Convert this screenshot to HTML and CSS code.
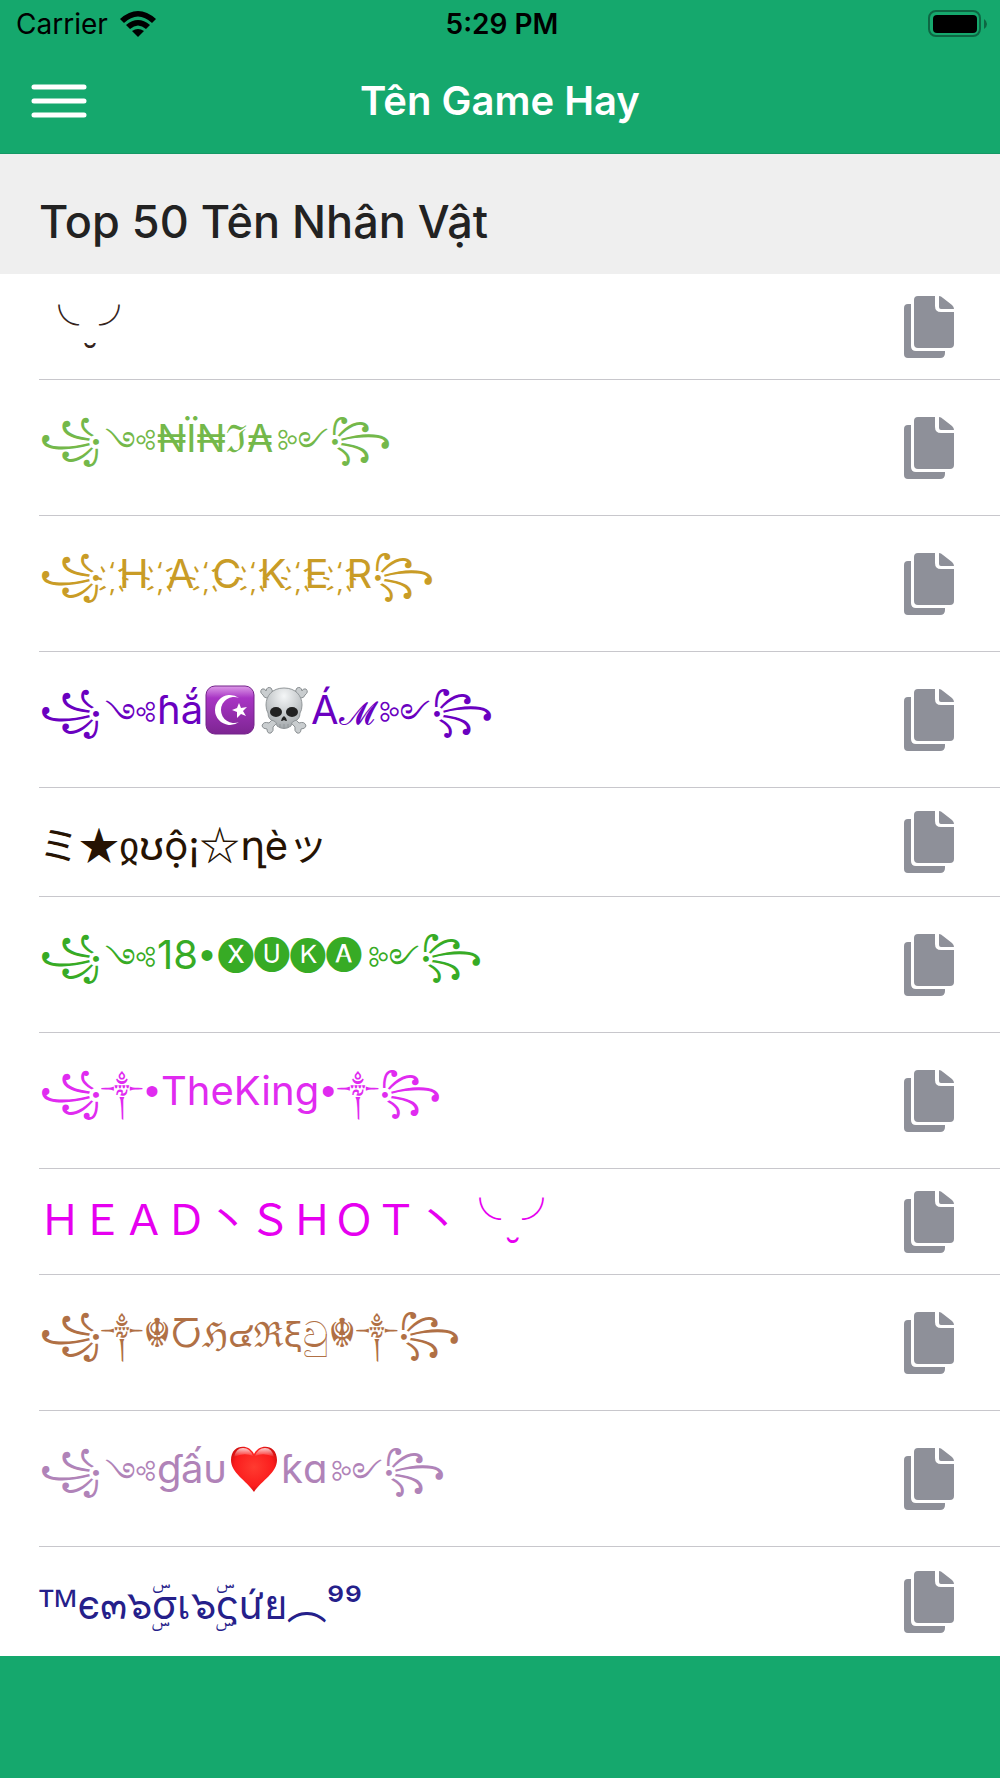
FILE: index.html
```html
<!DOCTYPE html>
<html lang="vi">
<head>
    <meta charset="UTF-8">
    <meta name="viewport" content="width=device-width, initial-scale=1.0">
    <title>Tên Game Hay</title>
    <link rel="stylesheet" href="styles.css">
</head>
<body>
    <!-- Shared icon -->
    <svg class="defs" width="0" height="0" aria-hidden="true">
        <symbol id="copy" viewBox="0 0 50 62">
            <path d="M14 0H31V10Q31 16 37 16H50V48Q50 52 46 52H14Q10 52 10 48V4Q10 0 14 0Z"/>
            <path d="M35 0Q37 0 39 2L48 9Q50 11 50 13H37Q35 13 35 11Z"/>
            <path d="M4 8H7V50Q7 55 12 55H41V57Q41 62 36 62H4Q0 62 0 58V12Q0 8 4 8Z"/>
        </symbol>
    </svg>

    <header class="header">
        <div class="status-bar">
            <div class="carrier">
                <span>Carrier</span>
                <svg width="36" height="26" viewBox="0 0 36 26" aria-hidden="true">
                    <path d="M0 8Q18 -8 36 8L32 12Q18 -1 4 12Z"/>
                    <path d="M6 14Q18 4 30 14L26 18Q18 11 10 18Z"/>
                    <path d="M12 20Q18 16 24 20L18 26Z"/>
                </svg>
            </div>
            <span class="time">5:29 PM</span>
            <svg class="battery" width="60" height="28" viewBox="0 0 60 28" aria-hidden="true">
                <rect x="1" y="1" width="51" height="25" rx="7" fill="none" stroke="#0e6643" stroke-width="2"/>
                <rect x="5" y="5" width="44" height="18" rx="4"/>
                <path d="M56 9Q59 11 59 14T56 19Z" fill="#0e6643"/>
            </svg>
        </div>
        <nav class="nav">
            <button class="menu" type="button" aria-label="Menu">
                <svg width="56" height="34" viewBox="0 0 56 34" stroke="#fff" stroke-width="5" stroke-linecap="round">
                    <path d="M3 3H53M3 17H53M3 31H53"/>
                </svg>
            </button>
            <h1>Tên Game Hay</h1>
        </nav>
    </header>

    <main>
        <h2>Top 50 Tên Nhân Vật</h2>
        <ul class="list">
            <li class="row short c1">
                <span class="name"><span class="cjk">╰ ̮ ╯</span></span>
                <button class="copy" type="button" aria-label="Copy"><svg width="50" height="62"><use href="#copy"/></svg></button>
            </li>
            <li class="row c2">
                <span class="name">꧁<span class="orn swirl">༺</span><span class="small">₦Ï₦ℑ₳</span><span class="orn swirl">༻</span>꧂</span>
                <button class="copy" type="button" aria-label="Copy"><svg width="50" height="62"><use href="#copy"/></svg></button>
            </li>
            <li class="row c3">
                <span class="name">꧁<span class="ring">&nbsp;҉</span>H<span class="ring">&nbsp;҉</span>A<span class="ring">&nbsp;҉</span>C<span class="ring">&nbsp;҉</span>K<span class="ring">&nbsp;҉</span>E<span class="ring">&nbsp;҉</span>R꧂</span>
                <button class="copy" type="button" aria-label="Copy"><svg width="50" height="62"><use href="#copy"/></svg></button>
            </li>
            <li class="row c4">
                <span class="name">꧁<span class="orn swirl">༺</span>ɦắ<svg class="emoji" width="50" height="50" viewBox="0 0 50 50" role="img" aria-label="☪️">
                    <defs>
                        <linearGradient id="tile" x1="0" y1="0" x2="0" y2="1">
                            <stop offset="0" stop-color="#dd9be8"/>
                            <stop offset=".25" stop-color="#a835c4"/>
                            <stop offset="1" stop-color="#7d2592"/>
                        </linearGradient>
                    </defs>
                    <rect x="1" y="1" width="48" height="48" rx="9" fill="url(#tile)" stroke="#74238a"/>
                    <path d="M34 13A15 15 0 1 0 34 37A13 13 0 1 1 34 13Z" fill="#fff"/>
                    <path d="M34 18l2 5 6-1-4 4 3 5-5-2-4 4v-6l-5-2 5-2z" fill="#fff"/>
                </svg><svg class="emoji skull" width="50" height="50" viewBox="0 0 50 50" role="img" aria-label="☠️">
                    <defs>
                        <radialGradient id="bone" cx=".5" cy=".2" r=".8">
                            <stop offset="0" stop-color="#f4f6f7"/>
                            <stop offset="1" stop-color="#a3a8ab"/>
                        </radialGradient>
                    </defs>
                    <g fill="#c9cdcf" stroke="#8b9093">
                        <path d="M4 10Q0 7 3 4Q6 3 7 6Q8 1 12 3Q15 6 12 9L40 38Q46 36 47 41Q46 44 42 44Q42 49 38 48Q35 46 36 42L8 13Q5 13 4 10Z"/>
                        <path d="M46 10Q50 7 47 4Q44 3 43 6Q42 1 38 3Q35 6 38 9L10 38Q4 36 3 41Q4 44 8 44Q8 49 12 48Q15 46 14 42L42 13Q45 13 46 10Z"/>
                    </g>
                    <path d="M25 3C13 3 7 11 7 20Q7 25 9 28Q9 35 15 36Q18 37 18 41Q25 46 32 41Q32 37 35 36Q41 35 41 28Q43 25 43 20C43 11 37 3 25 3Z" fill="url(#bone)" stroke="#92979a"/>
                    <ellipse cx="17" cy="27" rx="6" ry="5" fill="#222"/>
                    <ellipse cx="33" cy="27" rx="6" ry="5" fill="#222"/>
                    <path d="M25 31Q28 33 28 36Q26 36 25 35Q24 36 22 36Q22 33 25 31Z" fill="#222"/>
                    <path d="M21 39V43M25 39V44M29 39V43" stroke="#92979a"/>
                </svg>Á<span class="orn">𝓜</span><span class="orn swirl">༻</span>꧂</span>
                <button class="copy" type="button" aria-label="Copy"><svg width="50" height="62"><use href="#copy"/></svg></button>
            </li>
            <li class="row medium c5">
                <span class="name"><span class="cjk">ミ★</span>ჲʊộ¡<span class="cjk">☆</span>ղè<span class="cjk">ッ</span></span>
                <button class="copy" type="button" aria-label="Copy"><svg width="50" height="62"><use href="#copy"/></svg></button>
            </li>
            <li class="row c6">
                <span class="name">꧁<span class="orn swirl">༺</span>18<span class="dot">•</span><span class="circled">🅧🅤🅚🅐</span><span class="orn swirl">༻</span>꧂</span>
                <button class="copy" type="button" aria-label="Copy"><svg width="50" height="62"><use href="#copy"/></svg></button>
            </li>
            <li class="row c7">
                <span class="name">꧁<span class="orn">༒</span><span class="dot">•</span>TheKing<span class="dot">•</span><span class="orn">༒</span>꧂</span>
                <button class="copy" type="button" aria-label="Copy"><svg width="50" height="62"><use href="#copy"/></svg></button>
            </li>
            <li class="row short c8">
                <span class="name"><span class="cjk wide">ＨＥＡＤ丶ＳＨＯＴ丶╰ ̮ ╯</span></span>
                <button class="copy" type="button" aria-label="Copy"><svg width="50" height="62"><use href="#copy"/></svg></button>
            </li>
            <li class="row c9">
                <span class="name">꧁<span class="orn">༒</span>☬<span class="runes">Ⴀℌ๔ℜξවු</span>☬<span class="orn">༒</span>꧂</span>
                <button class="copy" type="button" aria-label="Copy"><svg width="50" height="62"><use href="#copy"/></svg></button>
            </li>
            <li class="row c10">
                <span class="name">꧁<span class="orn swirl">༺</span>ɠấυ<svg class="emoji" width="50" height="50" viewBox="0 0 50 50" role="img" aria-label="❤️">
                    <defs>
                        <radialGradient id="heart" cx=".5" cy=".45" r=".6">
                            <stop offset="0" stop-color="#ff3b30"/>
                            <stop offset=".7" stop-color="#fb1d1d"/>
                            <stop offset="1" stop-color="#c40d0d"/>
                        </radialGradient>
                        <linearGradient id="shine" x1="0" y1="0" x2="0" y2="1">
                            <stop offset="0" stop-color="#fff" stop-opacity=".8"/>
                            <stop offset="1" stop-color="#fff" stop-opacity="0"/>
                        </linearGradient>
                    </defs>
                    <path d="M25 10C20 -1 2 0 2 16C2 29 17 36 25 48C33 36 48 29 48 16C48 0 30 -1 25 10Z" fill="url(#heart)"/>
                    <path d="M5 13Q7 4 14 4Q21 4 24 12Q15 8 5 13ZM45 13Q43 4 36 4Q29 4 26 12Q35 8 45 13Z" fill="url(#shine)"/>
                </svg>ƙɑ<span class="orn swirl">༻</span>꧂</span>
                <button class="copy" type="button" aria-label="Copy"><svg width="50" height="62"><use href="#copy"/></svg></button>
            </li>
            <li class="row medium c11">
                <span class="name"><span class="mark">ᵀᴹ</span>є๓๖ۣۜσเ๖ۣۜςứย<span class="cjk">︵</span>⁹⁹</span>
                <button class="copy" type="button" aria-label="Copy"><svg width="50" height="62"><use href="#copy"/></svg></button>
            </li>
        </ul>
    </main>
</body>
</html>
```
FILE: styles.css
```css
* {
    box-sizing: border-box;
}
body {
    margin: 0;
    font-family: Inter, "Noto Sans", sans-serif;
    background-color: #15a86d;
    color: #000;
}
.defs {
    position: absolute;
}
button {
    display: flex;
    padding: 0;
    border: none;
    background: none;
    cursor: pointer;
}

/* Header */
.header {
    border-bottom: 1px solid #159864;
}
.status-bar {
    display: grid;
    grid-template-columns: 1fr auto 1fr;
    align-items: center;
    height: 48px;
    padding: 0 12px 0 16px;
    font-size: 28px;
}
.carrier {
    display: flex;
    align-items: center;
    gap: 12px;
}
.time {
    font-weight: 600;
}
.battery {
    justify-self: end;
}
.nav {
    display: grid;
    grid-template-columns: 1fr auto 1fr;
    align-items: center;
    height: 105px;
    padding: 0 31px;
}
.nav h1 {
    margin: 0;
    color: #fff;
    font-size: 40px;
    font-weight: 600;
}

h2 {
    margin: 0;
    padding: 38px 39px 22px;
    background-color: #efefef;
    color: #222;
    font-size: 45px;
    font-weight: 500;
    line-height: 60px;
}

/* Names */
.list {
    margin: 0;
    padding: 0 0 0 39px;
    list-style: none;
    background-color: #fff;
}
.row {
    display: flex;
    justify-content: space-between;
    align-items: center;
    min-height: 136px;
    padding-right: 46px;
    border-bottom: 1px solid #c8c7cc;
}
.row:last-child {
    border-bottom: none;
}
.name {
    align-self: flex-start;
    padding-top: 26px;
    font-size: 40px;
    line-height: 64px;
    white-space: nowrap;
}
.name span {
    line-height: 0;
}
.short {
    min-height: 106px;
}
.short .name {
    padding-top: 20px;
}
.medium {
    min-height: 109px;
}

.copy svg {
    fill: #8e9099;
}

/* Letters and ornaments that need their own font or size */
.cjk {
    font-family: "Noto Sans CJK JP", sans-serif;
}
.wide {
    font-size: 42px;
}
.small {
    font-size: 38px;
}
.orn {
    font-size: 32px;
}
.swirl {
    margin: 0 1px 0 4px;
    vertical-align: -2px;
}
.runes {
    font-size: 35px;
}
.circled {
    margin: 0 2px;
    font-family: "DejaVu Sans Condensed", sans-serif;
    font-size: 35px;
    vertical-align: 6px;
}
.dot {
    margin: 0 2px;
    font-family: "Liberation Sans", sans-serif;
}
.ring {
    display: inline-flex;
    justify-content: center;
    width: 32px;
    margin-right: -14px;
    font-size: 36px;
}
.emoji {
    margin: 0 2px;
    vertical-align: -11px;
}
.mark {
    font-weight: 500;
}

.c1 { color: #35241c; }
.c2 { color: #74b84a; }
.c3 { color: #c99c26; }
.c4 { color: #6a00c0; }
.c5 { color: #261303; }
.c6 { color: #37ab25; }
.c7 { color: #e02bf0; }
.c8 { color: #e600f0; }
.c9 { color: #b07045; }
.c10 { color: #b083b8; }
.c11 { color: #25208a; }
```
